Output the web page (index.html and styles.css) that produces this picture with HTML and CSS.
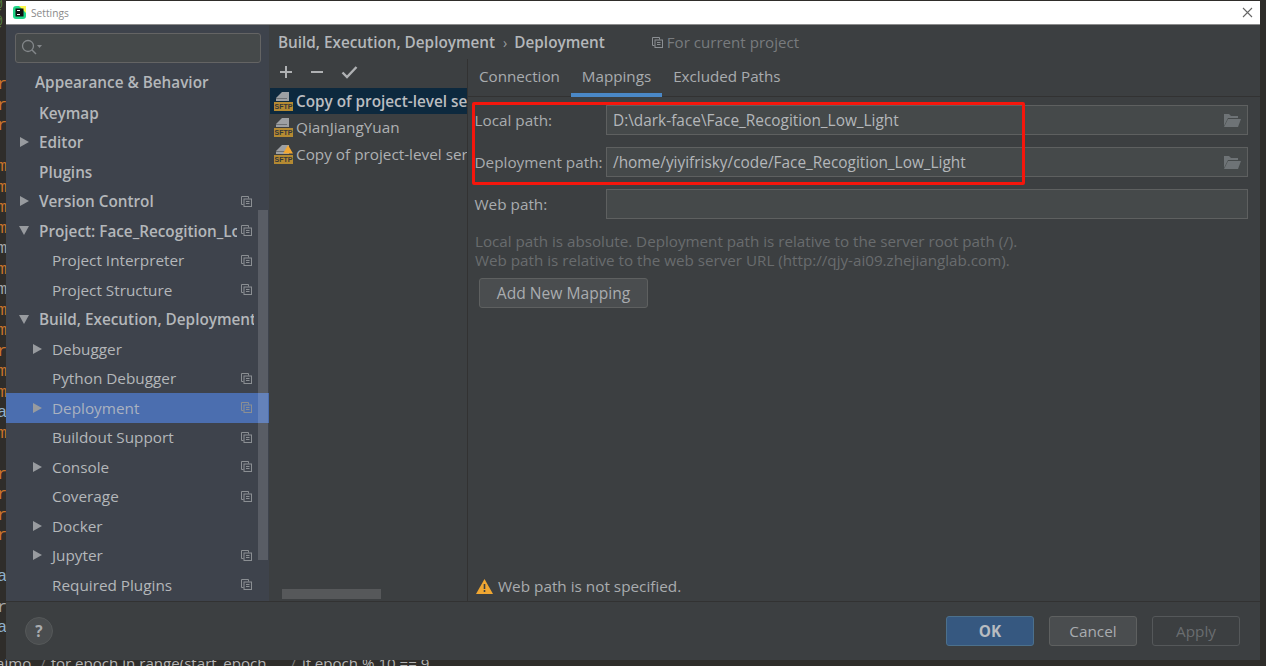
FILE: index.html
```html
<!DOCTYPE html>
<html lang="en">
<head>
<meta charset="utf-8">
<title>Settings</title>
<link rel="stylesheet" href="styles.css">
</head>
<body>
<svg width="0" height="0" class="defs">
  <symbol id="copy" viewBox="0 0 11 11"><path d="M2.500 8.500H.5V.5h7v2" fill="none" stroke="#8b8f93"/><rect x="3" y="3" width="7.500" height="7.500" fill="none" stroke="#8b8f93"/><path d="M5 5.500h3.500M5 7.500h3.500" stroke="#8b8f93"/></symbol>
  <symbol id="sftp" viewBox="0 0 19 20"><path d="M8 1h7v9H2v-3z" fill="#9da0a3"/><path d="M2 7.500h11" stroke="#6d7073"/><rect x="0" y="11" width="19" height="9" fill="#b48a32"/></symbol>
  <symbol id="folder" viewBox="0 0 18 14"><path d="M1 13V1h5l2 2h7v2H5L1 13z" fill="#6e7376"/><path d="M5 6h13l-3 8H1z" fill="#6e7376"/></symbol>
</svg>
<div class="bg">
  <div class="codetop"><span>@</span><span>@</span><span>'</span></div>
  <div class="code"><span>r</span><span>r</span><span>r</span><span></span><span>m</span><span>m</span><span>m</span><span>m</span><span class="g">m</span><span>m</span><span class="g">m</span><span>m</span><span>m</span><span>r</span><span>m</span><span>m</span><span class="w">a</span><span>m</span><span></span><span>r</span><span>r</span><span>r</span><span>r</span><span></span><span class="w">a</span><span class="g gap">r</span><span class="w">a</span></div>
  <div class="codeline"><span class="c1">aimo</span><span class="c2">/</span><span class="c3">for epoch in range(start_epoch....</span><span class="c4">/</span><span class="c5">if epoch % 10 == 9</span></div>
</div>
<main class="dialog">
  <header class="titlebar">
    <svg class="logo" width="13" height="13" viewBox="0 0 13 13"><rect width="13" height="13" rx="3" fill="#21d789"/><path d="M6 0h7v7z" fill="#fcf84a"/><rect x="2.500" y="2.500" width="8" height="8" fill="#111"/><path d="M4 4h3v1H4zM4 8h3v1H4z" fill="#fff"/></svg>
    <span class="wintitle">Settings</span>
    <svg class="close" width="11" height="11" viewBox="0 0 11 11"><path d="M1 1l9 9M10 1l-9 9" stroke="#666" stroke-width="1.100"/></svg>
  </header>
  <div class="body">
    <nav class="sidebar">
      <div class="search">
        <svg width="22" height="18" viewBox="0 0 22 18"><circle cx="7" cy="7" r="5.500" fill="none" stroke="#83878a" stroke-width="1.300"/><path d="M11 11l4 4" stroke="#83878a" stroke-width="1.500"/><path d="M16 6h5l-2.500 3z" fill="#83878a"/></svg>
      </div>
      <div class="tree">
        <div class="row top b"><span class="lbl">Appearance &amp; Behavior</span></div>
        <div class="row first b"><span class="lbl">Keymap</span></div>
        <div class="row b"><i class="arr r"></i><span class="lbl">Editor</span></div>
        <div class="row b"><span class="lbl">Plugins</span></div>
        <div class="row b"><i class="arr r"></i><span class="lbl">Version Control</span><svg class="cp"><use href="#copy"/></svg></div>
        <div class="row b"><i class="arr d"></i><span class="lbl clip1">Project: Face_Recogition_Low_Light</span><svg class="cp"><use href="#copy"/></svg></div>
        <div class="row s"><span class="lbl">Project Interpreter</span><svg class="cp"><use href="#copy"/></svg></div>
        <div class="row s"><span class="lbl">Project Structure</span><svg class="cp"><use href="#copy"/></svg></div>
        <div class="row b"><i class="arr d"></i><span class="lbl clip2">Build, Execution, Deployment</span></div>
        <div class="row s"><i class="arr r"></i><span class="lbl">Debugger</span></div>
        <div class="row s"><span class="lbl">Python Debugger</span><svg class="cp"><use href="#copy"/></svg></div>
        <div class="row s sel"><i class="arr r"></i><span class="lbl">Deployment</span><svg class="cp"><use href="#copy"/></svg></div>
        <div class="row s"><span class="lbl">Buildout Support</span><svg class="cp"><use href="#copy"/></svg></div>
        <div class="row s"><i class="arr r"></i><span class="lbl">Console</span><svg class="cp"><use href="#copy"/></svg></div>
        <div class="row s"><span class="lbl">Coverage</span><svg class="cp"><use href="#copy"/></svg></div>
        <div class="row s"><i class="arr r"></i><span class="lbl">Docker</span></div>
        <div class="row s"><i class="arr r"></i><span class="lbl">Jupyter</span><svg class="cp"><use href="#copy"/></svg></div>
        <div class="row s"><span class="lbl">Required Plugins</span><svg class="cp"><use href="#copy"/></svg></div>
      </div>
      <div class="vscroll"></div>
    </nav>
    <section class="content">
      <div class="crumbs">
        <span class="crumb">Build, Execution, Deployment</span><span class="sep">›</span><span class="crumb">Deployment</span>
        <span class="forproj"><svg class="cp2"><use href="#copy"/></svg>For current project</span>
      </div>
      <div class="panes">
        <div class="servers">
          <div class="tools">
            <svg width="14" height="14" viewBox="0 0 14 14"><path d="M7 1v12M1 7h12" stroke="#afb1b3" stroke-width="2"/></svg>
            <svg width="14" height="14" viewBox="0 0 14 14"><path d="M1 7h12" stroke="#afb1b3" stroke-width="2"/></svg>
            <svg width="17" height="14" viewBox="0 0 17 14"><path d="M1.500 7.500l4.500 4.500 9.500-10" fill="none" stroke="#afb1b3" stroke-width="2.400"/></svg>
          </div>
          <div class="srv on"><span class="sico"><svg width="19" height="20"><use href="#sftp"/></svg><b>SFTP</b></span><span class="stxt">Copy of project-level server</span></div>
          <div class="srv"><span class="sico"><svg width="19" height="20"><use href="#sftp"/></svg><b>SFTP</b></span><span class="stxt">QianJiangYuan</span></div>
          <div class="srv"><span class="sico"><svg width="19" height="20"><use href="#sftp"/><path d="M14 1l5 8.500H9z" fill="#f0a732"/></svg><b>SFTP</b></span><span class="stxt">Copy of project-level server</span></div>
          <div class="hscroll"></div>
        </div>
        <div class="detail">
          <div class="tabs"><span class="tab">Connection</span><span class="tab active">Mappings</span><span class="tab">Excluded Paths</span></div>
          <div class="form">
            <label class="lab">Local path:</label>
            <div class="field"><span>D:\dark-face\Face_Recogition_Low_Light</span><svg width="18" height="14"><use href="#folder"/></svg></div>
            <label class="lab">Deployment path:</label>
            <div class="field"><span>/home/yiyifrisky/code/Face_Recogition_Low_Light</span><svg width="18" height="14"><use href="#folder"/></svg></div>
            <label class="lab">Web path:</label>
            <div class="field"></div>
          </div>
          <p class="hint">Local path is absolute. Deployment path is relative to the server root path (/).<br>Web path is relative to the web server URL (http://qjy-ai09.zhejianglab.com).</p>
          <button class="btn add">Add New Mapping</button>
          <div class="warn">
            <svg width="17" height="15" viewBox="0 0 17 15"><path d="M8.500 0L17 15H0z" fill="#f0a732"/><path d="M8.500 5v5M8.500 11v2" stroke="#3c3f41" stroke-width="1.600"/></svg>
            <span>Web path is not specified.</span>
          </div>
          <div class="redbox"></div>
        </div>
      </div>
    </section>
  </div>
  <footer class="footer">
    <span class="help">?</span>
    <div class="actions">
      <button class="btn ok">OK</button>
      <button class="btn">Cancel</button>
      <button class="btn off">Apply</button>
    </div>
  </footer>
</main>
</body>
</html>
```

FILE: styles.css
```css
* { box-sizing: border-box; }
html, body { margin: 0; height: 100%; overflow: hidden; }
body {
  background: #2f2d2a;
  padding: 1px 6px 6px;
  font-family: "Open Sans", "Noto Sans", sans-serif;
  font-size: 15.300px;
  color: #afb1b3;
}
.defs { position: absolute; }
.bg { position: absolute; inset: 0; overflow: hidden; }
.codetop {
  position: absolute; left: -6px; top: -3px;
  display: flex; flex-direction: column;
  font: 14px/17px "Liberation Mono", monospace; color: #5d8a45;
}
.code {
  position: absolute; left: -3px; top: 75px; width: 12px;
  display: flex; flex-direction: column;
  font: 17px/20.500px "Liberation Mono", monospace; color: #c8742a;
}
.code span { height: 20.500px; }
.code .gap { margin-top: 10px; }
.code .w { color: #8fb1cc; }
.code .g { color: #a2a6a8; }
.codeline {
  position: absolute; left: -4px; top: 653px; white-space: nowrap;
  display: flex;
  font: 15.100px/20px "Open Sans", sans-serif; color: #b4b4b4;
}
.c2 { margin-left: 9px; color: #777; }
.c3 { margin-left: 5px; }
.c4 { margin-left: 8px; color: #777; }
.c5 { margin-left: 6px; }
.dialog {
  position: relative; height: 659px; width: 1254px;
  display: flex; flex-direction: column;
  background: #3c3f41;
}
.titlebar {
  height: 24px; flex: none; background: #fff;
  display: flex; align-items: center; padding: 0 7px;
  border-bottom: 1px solid #8c8c8c;
}
.logo { margin-right: 5px; }
.wintitle { font-size: 10.200px; color: #8a8a8a; }
.close { margin-left: auto; margin-right: 0; }
.body { flex: 1; display: flex; min-height: 0; }
.sidebar {
  position: relative; width: 263px; flex: none;
  background: #3e434c; padding: 8px 0 0;
}
.search {
  margin: 0 8px 0 9px; height: 30px;
  background: #45494a; border: 1px solid #646464; border-radius: 3px;
  display: flex; align-items: center; padding-left: 5px;
}
.tree { margin-top: 4px; }
.row {
  position: relative; height: 29.500px; display: flex; align-items: center;
  color: #b4b7ba; white-space: nowrap;
}
.row.b { font-weight: 600; }
.row .lbl { position: absolute; left: 33px; top: 50%; transform: translateY(-50%); }
.row.s .lbl { left: 46px; }
.row.top .lbl { left: 29px; }
.row.first { margin-top: 1.500px; }
.row .clip1 { width: 198px; overflow: hidden; }
.row .clip2 { width: 215px; overflow: hidden; }
.row.sel { background: #4b6eaf; color: #aab2c0; }
.arr { position: absolute; width: 0; height: 0; }
.arr.r { left: 14px; border-left: 9px solid #989b9f; border-top: 5.500px solid transparent; border-bottom: 5.500px solid transparent; }
.row.s .arr.r { left: 27px; }
.arr.d { left: 13px; border-top: 9px solid #989b9f; border-left: 5.500px solid transparent; border-right: 5.500px solid transparent; }
.cp { position: absolute; left: 235px; width: 11px; height: 11px; }
.cp2 { width: 11px; height: 11px; margin-right: 4px; flex: none; }
.vscroll {
  position: absolute; left: 252px; top: 185px; width: 10px; height: 350px;
  background: rgba(255, 255, 255, .14);
}
.content { flex: 1; display: flex; flex-direction: column; min-width: 0; }
.crumbs {
  height: 34px; flex: none; display: flex; align-items: center;
  padding: 0 0 0 9px;
}
.crumb { font-weight: 600; color: #b4b7ba; }
.sep { margin: 0 7px 0 8px; color: #9a9da0; font-size: 14px; }
.forproj { margin-left: 47px; color: #787b7e; display: flex; align-items: center; font-size: 15.100px; }
.panes { flex: 1; display: flex; min-height: 0; }
.servers {
  position: relative; width: 198px; flex: none; margin-left: 1px;
  border-right: 1px solid #323232;
}
.tools { height: 29px; display: flex; align-items: center; gap: 17px; padding: 0 0 3px 9px; }
.srv { height: 26.250px; display: flex; align-items: center; padding-left: 4px; overflow: hidden; white-space: nowrap; }
.srv.on { background: #0d293e; color: #bbbdc0; font-weight: 600; }
.stxt { margin-left: 3px; }
.sico { position: relative; width: 19px; height: 20px; flex: none; display: block; }
.sico b {
  position: absolute; left: 0; top: 12px; width: 19px; text-align: center;
  font: 700 7px/8px "Liberation Sans", sans-serif; color: #33363a;
}
.hscroll { position: absolute; left: 12px; bottom: 2px; width: 99px; height: 10px; background: #56585a; }
.detail { position: relative; flex: 1; display: flex; flex-direction: column; min-width: 0; }
.tabs {
  height: 39px; margin-top: -1px; flex: none; display: flex;
  border-bottom: 1px solid #323232;
}
.tab { padding: 0 11px 4px; display: flex; align-items: center; color: #a9acaf; height: 39px; font-size: 15.200px; }
.tab.active { box-shadow: inset 0 -4px 0 #4a88c7; }
.form {
  display: grid; grid-template-columns: 131.500px 642px; grid-auto-rows: 30px; row-gap: 12px;
  padding: 8px 0 0 6.500px; align-items: center;
}
.lab { color: #a9acaf; white-space: nowrap; }
.field {
  height: 30px; background: #45494a; border: 1px solid #5e6060;
  display: flex; align-items: center; justify-content: space-between;
  padding: 0 6px; color: #b4b7ba; white-space: nowrap; font-size: 15.400px;
}
.hint { margin: 13px 0 0 7px; line-height: 19px; color: #696c6e; font-size: 15.200px; }
.btn {
  font: inherit; width: 88px; height: 30px; padding: 0;
  background: #4a4d4f; border: 1px solid #5e6060; border-radius: 3px; color: #a9acaf;
}
.add { width: 169px; margin: 8px 0 0 11px; align-self: flex-start; font-size: 15.600px; }
.warn { margin-top: auto; height: 28px; display: flex; align-items: center; gap: 5px; padding: 0 0 2px 8px; color: #a9acaf; }
.redbox {
  position: absolute; left: 4px; top: 43px; width: 553px; height: 83px;
  border: 3px solid #f5160c; border-radius: 2px;
}
.footer {
  height: 59px; flex: none; display: flex; align-items: center; justify-content: space-between;
  border-top: 1px solid #323232; padding: 0 20px 0 19px;
}
.help {
  width: 28px; height: 28px; border-radius: 50%; background: #4a4d4f; border: 1px solid #555859;
  display: flex; align-items: center; justify-content: center; font-weight: 700; color: #a9acaf;
}
.actions { display: flex; gap: 15px; }
.btn.ok { background: #365880; border-color: #4c708c; font-weight: 700; color: #b8bcc0; }
.btn.off { background: transparent; color: #6a6d70; border-color: #55585a; }
```
